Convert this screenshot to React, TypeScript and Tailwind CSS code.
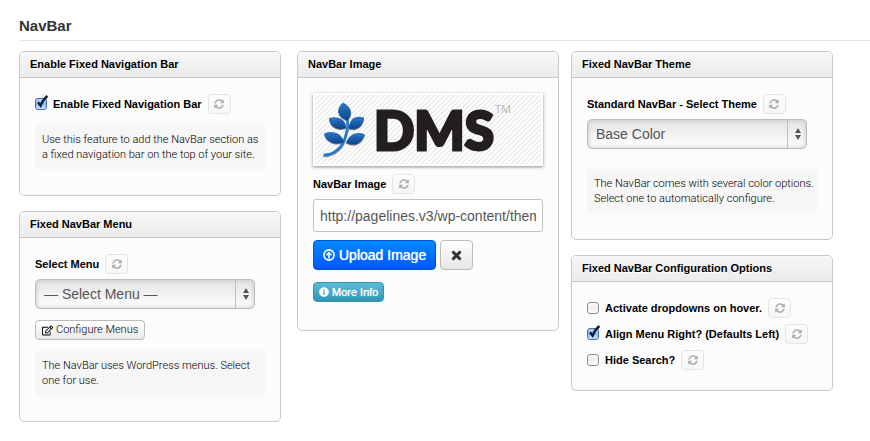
import { useId, useState } from "react";
import type { ReactNode } from "react";
import { FaInfoCircle, FaRegEdit, FaSyncAlt, FaTimes } from "react-icons/fa";

function Card({ title, children, className = "" }: { title: string; children: ReactNode; className?: string }) {
  return (
    <section className="rounded-[5px] border border-[#c8c8c8] bg-[#fcfcfc]">
      <h2 className="rounded-t-[4px] border-b border-[#c8c8c8] bg-linear-to-b from-[#f7f7f7] to-[#ebebeb] px-[10px] text-[11px] leading-[25px] font-bold text-black [text-shadow:0_1px_0_#fff]">
        {title}
      </h2>
      <div className={`flex flex-col px-[15px] ${className}`}>{children}</div>
    </section>
  );
}

function ResetButton() {
  return (
    <button
      type="button"
      aria-label="Reset"
      className="flex h-5 w-[23px] shrink-0 items-center justify-center rounded-[4px] border border-[#e4e4e4] bg-linear-to-b from-[#fdfdfd] to-[#f6f6f6] text-[#adadad]"
    >
      <FaSyncAlt size={10} />
    </button>
  );
}

function CheckRow({ label, initial = false }: { label: string; initial?: boolean }) {
  const id = useId();
  const [on, setOn] = useState(initial);
  return (
    <div className="flex items-center">
      <span className="relative mr-[6px] flex size-3">
        <input
          id={id}
          type="checkbox"
          checked={on}
          onChange={(e) => setOn(e.target.checked)}
          className="size-3 appearance-none rounded-[3px] border border-[#8e8e8e] bg-linear-to-b from-[#fdfdfd] via-[#eeeeee] to-[#ffffff] checked:border-[#4a6ba5] checked:from-[#b5d3f7] checked:via-[#8fbcf3] checked:to-[#c6e6ff]"
        />
        {on && (
          <svg viewBox="0 0 14 14" className="pointer-events-none absolute -top-[3px] left-0 size-[14px]" aria-hidden="true">
            <path d="M3 7.2 L5.6 10.6 C7.2 6.6 9.4 3.4 12.4 1" fill="none" stroke="#0c1c38" strokeWidth="2.3" />
          </svg>
        )}
      </span>
      <label htmlFor={id} className="mr-[6px] text-[11px] leading-5 font-bold text-black">
        {label}
      </label>
      <ResetButton />
    </div>
  );
}

function FieldLabel({ htmlFor, children }: { htmlFor: string; children: ReactNode }) {
  return (
    <div className="flex items-center gap-[6px]">
      <label htmlFor={htmlFor} className="text-[11px] leading-5 font-bold text-black">
        {children}
      </label>
      <ResetButton />
    </div>
  );
}

function SelectBox({ id, option }: { id: string; option: string }) {
  return (
    <div className="relative mt-[5px] mr-[10px]">
      <select
        id={id}
        className="block h-[30px] w-full appearance-none rounded-[5px] border border-[#bcbcbc] bg-linear-to-b from-[#e3e3e3] via-[#f1f1f1] to-[#ffffff] pr-6 pl-2 text-[14px] text-[#555] shadow-[inset_0_0_5px_#c4c4c4]"
      >
        <option>{option}</option>
      </select>
      <span className="pointer-events-none absolute inset-y-px right-0 flex w-5 items-center justify-center border-l border-[#c0c0c0]">
        <svg viewBox="0 0 6 12" className="h-3 w-[6px]" fill="#555" aria-hidden="true">
          <path d="M3 0 L6 5 H0 Z M0 7 H6 L3 12 Z" />
        </svg>
      </span>
    </div>
  );
}

function Note({ children, className = "" }: { children: ReactNode; className?: string }) {
  return (
    <p className={`bg-[#f6f6f6] py-[7px] pr-px pl-[7px] font-[Roboto,sans-serif] text-[11px] leading-[15px] font-light text-black ${className}`}>
      {children}
    </p>
  );
}

function Logo() {
  return (
    <svg viewBox="0 0 226 69" className="block h-[69px] w-full" role="img" aria-label="DMS">
      <defs>
        <pattern id="stripes" width="5" height="5" patternUnits="userSpaceOnUse">
          <rect width="5" height="5" fill="#fff" />
          <path d="M-1 1 L1 -1 M0 5 L5 0 M4 6 L6 4" stroke="#e6e6e6" strokeWidth="1.2" />
        </pattern>
        <linearGradient id="leaf" x1="0" y1="0" x2="0" y2="1">
          <stop offset="0" stopColor="#2f78c8" />
          <stop offset="1" stopColor="#0b438c" />
        </linearGradient>
        <filter id="leafShadow" x="-20%" y="-20%" width="140%" height="140%">
          <feDropShadow dx="0" dy="1" stdDeviation="0.6" floodColor="#000" floodOpacity="0.5" />
        </filter>
      </defs>
      <rect width="226" height="69" fill="url(#stripes)" />
      <g filter="url(#leafShadow)">
        <path d="M8.5 60 C20 60 28 51 30 43 C32 36 34 31 32 22" fill="none" stroke="#2878c8" strokeWidth="2.6" />
        <g fill="url(#leaf)">
          <path d="M28 7.5 C37 12 38.5 20 32 25.5 C22 21.5 20.5 14 28 7.5 Z" />
          <path d="M14 23 C23 20.5 31 24 31 33 C21 36 14.5 31 14 23 Z" />
          <path d="M49 22.5 C48.5 31 42 36 34 33.5 C34 25 39 20 49 22.5 Z" />
          <path d="M9 38.5 C19 35 26 38 29 47 C20 51 11 47 9 38.5 Z" />
          <path d="M50 39.5 C47 49 39 52 31 47.5 C35 39 41 36 50 39.5 Z" />
        </g>
      </g>
      <text x="59" y="55" fill="#231f20" stroke="#231f20" strokeWidth="3" className="font-[Lato] text-[53px] font-black">DMS</text>
      <text x="180" y="18" fill="#b4b4b4" className="font-['Open_Sans'] text-[11px]">TM</text>
    </svg>
  );
}

export default function App() {
  return (
    <main className="min-h-screen bg-white pt-4 pb-4 pl-[19px] font-['Liberation_Sans',Arial,sans-serif]">
      <h1 className="border-b border-[#e2e2e2] pb-1 text-[15px] leading-5 font-bold text-[#333]">NavBar</h1>
      <div className="mt-[10px] mr-[37px] flex items-start">
        <div className="mr-4 flex min-w-0 flex-1 flex-col gap-[15px]">
          <Card title="Enable Fixed Navigation Bar" className="pt-4 pb-[26px]">
            <CheckRow label="Enable Fixed Navigation Bar" initial />
            <Note className="mt-[11px]">Use this feature to add the NavBar section as a fixed navigation bar on the top of your site.</Note>
          </Card>
          <Card title="Fixed NavBar Menu" className="pt-4 pb-[26px]">
            <FieldLabel htmlFor="menu">Select Menu</FieldLabel>
            <SelectBox id="menu" option="— Select Menu —" />
            <button
              type="button"
              className="mt-[11px] flex h-5 items-center gap-[3px] self-start rounded-[4px] border border-[#bbb] bg-linear-to-b from-white to-[#e9e9e9] px-[6px] font-[Roboto,sans-serif] text-[11px] font-light text-black"
            >
              <FaRegEdit size={11} />
              Configure Menus
            </button>
            <Note className="mt-[11px]">The NavBar uses WordPress menus. Select one for use.</Note>
          </Card>
        </div>

        <div className="mr-3 min-w-0 flex-1">
          <Card title="NavBar Image" className="pt-[15px] pb-7">
            <div className="bg-white p-[2px] shadow-[0_1px_3px_rgba(0,0,0,0.45)]">
              <Logo />
            </div>
            <div className="mt-2">
              <FieldLabel htmlFor="image">NavBar Image</FieldLabel>
            </div>
            <input
              id="image"
              type="text"
              defaultValue="http://pagelines.v3/wp-content/themes/dms/images/logo.png"
              className="mt-[5px] h-[33px] w-full rounded-[3px] border border-[#c4c4c4] bg-white px-[6px] text-[14px] text-[#555]"
            />
            <div className="mt-2 flex gap-1">
              <button
                type="button"
                className="flex h-[30px] items-center gap-1 rounded-[4px] border border-[#0055cc] bg-linear-to-b from-[#0088ff] to-[#0055ff] px-[9px] text-[14px] text-white [text-shadow:0_0_1px_#fff]"
              >
                <svg viewBox="0 0 12 12" className="size-3" fill="none" stroke="currentColor" strokeWidth="1.6" aria-hidden="true">
                  <circle cx="6" cy="6" r="5.1" />
                  <path d="M6 9.4 V4 M3.5 6.2 L6 3.6 L8.5 6.2" />
                </svg>
                Upload Image
              </button>
              <button
                type="button"
                aria-label="Remove image"
                className="flex h-[30px] w-[33px] items-center justify-center rounded-[4px] border border-[#bbb] bg-linear-to-b from-white to-[#e6e6e6] text-[#333]"
              >
                <FaTimes size={13} stroke="currentColor" strokeWidth={30} />
              </button>
            </div>
            <button
              type="button"
              className="mt-3 flex h-5 items-center gap-[3px] self-start rounded-[4px] border border-[#3a94b0] bg-linear-to-b from-[#5bbcd8] to-[#2f96b4] px-[5px] text-[11px] text-white [text-shadow:0_0_1px_#fff]"
            >
              <FaInfoCircle size={10} />
              More Info
            </button>
          </Card>
        </div>

        <div className="flex min-w-0 flex-1 flex-col gap-[15px]">
          <Card title="Fixed NavBar Theme" className="pt-4 pb-[26px]">
            <FieldLabel htmlFor="theme">Standard NavBar - Select Theme</FieldLabel>
            <SelectBox id="theme" option="Base Color" />
            <Note className="mt-5">The NavBar comes with several color options. Select one to automatically configure.</Note>
          </Card>
          <Card title="Fixed NavBar Configuration Options" className="gap-[6px] pt-4 pb-5">
            <CheckRow label="Activate dropdowns on hover." />
            <CheckRow label="Align Menu Right? (Defaults Left)" initial />
            <CheckRow label="Hide Search?" />
          </Card>
        </div>
      </div>
    </main>
  );
}
